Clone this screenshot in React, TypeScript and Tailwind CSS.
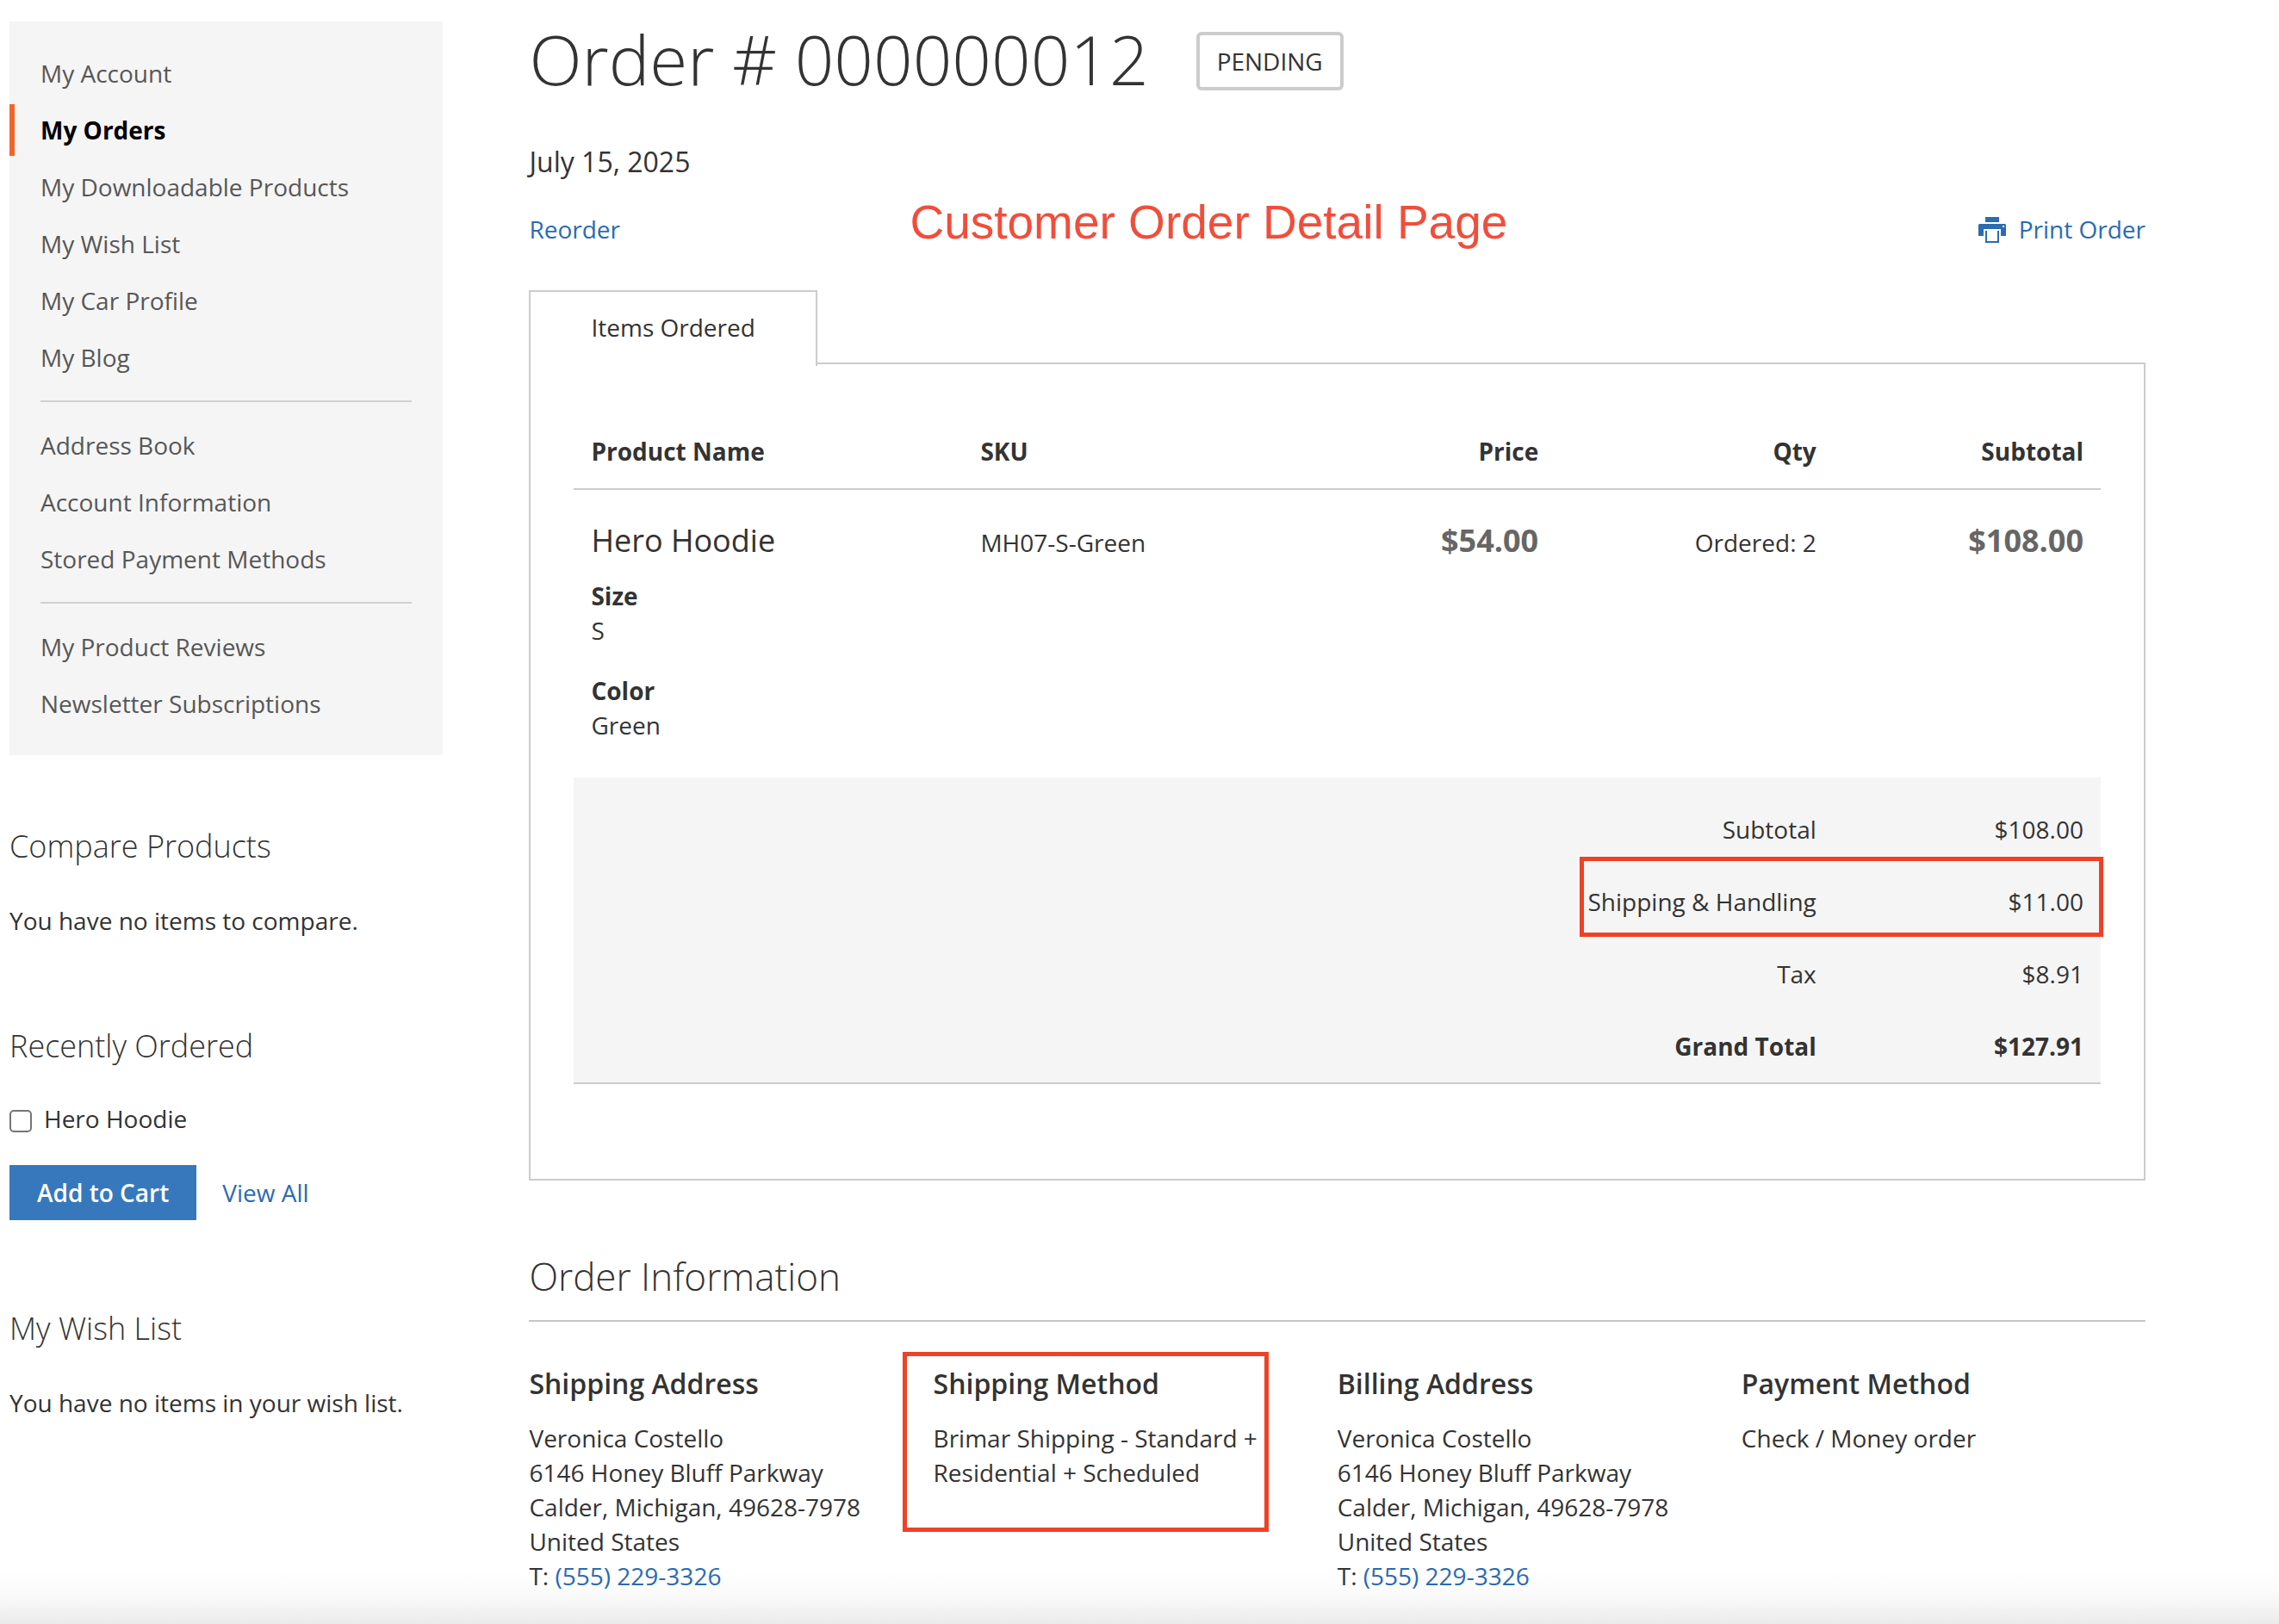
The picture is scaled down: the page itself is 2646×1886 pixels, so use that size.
import React from "react";

const navGroups = [
  ["My Account", "My Orders", "My Downloadable Products", "My Wish List", "My Car Profile", "My Blog"],
  ["Address Book", "Account Information", "Stored Payment Methods"],
  ["My Product Reviews", "Newsletter Subscriptions"],
];

const options = [
  { label: "Size", value: "S" },
  { label: "Color", value: "Green" },
];

const totals = [
  { label: "Subtotal", value: "$108.00" },
  { label: "Shipping & Handling", value: "$11.00", highlighted: true },
  { label: "Tax", value: "$8.91" },
  { label: "Grand Total", value: "$127.91", bold: true },
];

function AccountNav() {
  return (
    <nav className="mt-[25px] bg-[#f5f5f5] py-[30px]" aria-label="Account">
      {navGroups.map((group, g) => (
        <ul
          key={g}
          className={
            g > 0
              ? "relative mt-5 flex flex-col gap-1.5 pt-[22px] before:absolute before:inset-x-9 before:top-0 before:h-0.5 before:bg-[#d1d1d1]"
              : "flex flex-col gap-1.5"
          }
        >
          {group.map((item) => (
            <li key={item}>
              <a
                href="#"
                aria-current={item === "My Orders" ? "page" : undefined}
                className={
                  item === "My Orders"
                    ? "block border-l-6 border-[#f0652a] py-2.5 pl-[30px] font-bold text-black"
                    : "block border-l-6 border-transparent py-2.5 pl-[30px] text-[#575757]"
                }
              >
                {item}
              </a>
            </li>
          ))}
        </ul>
      ))}
    </nav>
  );
}

function PrinterIcon() {
  return (
    <svg width="32" height="30" viewBox="0 0 32 30" fill="currentColor" className="mt-0.5" aria-hidden="true">
      <rect x="8" y="0" width="16" height="6" />
      <path d="M1 8H31L32 9V22H26V14H6V22H0V9ZM28 10V12H30V10Z" fillRule="evenodd" />
      <path d="M8 16H10V28H22V16H24V30H8Z" />
    </svg>
  );
}

function Address() {
  return (
    <address className="not-italic">
      Veronica Costello
      <br />
      6146 Honey Bluff Parkway
      <br />
      Calder, Michigan, 49628-7978
      <br />
      United States
      <br />
      T:{" "}
      <a href="tel:5552293326" className="text-[#2a6bb2]">
        (555) 229-3326
      </a>
    </address>
  );
}

function InfoBox({ title, highlighted, children }: { title: string; highlighted?: boolean; children: React.ReactNode }) {
  return (
    <section className="relative">
      <h3 className="mb-[23px] text-[32px] leading-10 font-semibold">{title}</h3>
      <div className="pr-9">{children}</div>
      {highlighted && (
        <span className="pointer-events-none absolute -top-[17px] right-20 -left-9 h-[209px] border-5 border-[#ee4126]" />
      )}
    </section>
  );
}

export default function App() {
  return (
    <div className="relative min-h-screen bg-white pr-[155px] pb-4 pl-[11px] font-['Open_Sans','Noto_Sans',sans-serif] text-[28px] leading-10 text-[#333]">
      <div className="flex gap-[100px]">
        <aside className="w-[20.3%] shrink-0">
          <AccountNav />

          <section className="mt-[86px]">
            <h2 className="text-[36px] leading-10 font-light">Compare Products</h2>
            <p className="mt-[46px] whitespace-nowrap">You have no items to compare.</p>
          </section>

          <section className="mt-[106px]">
            <h2 className="text-[36px] leading-10 font-light">Recently Ordered</h2>
            <label className="mt-11 flex items-center gap-3.5">
              <input
                type="checkbox"
                className="mt-1.5 size-[26px] appearance-none rounded-[5px] border-2 border-[#767676] bg-white checked:bg-[#3778bd]"
              />
              Hero Hoodie
            </label>
            <div className="mt-[34px] flex items-center gap-[30px]">
              <button type="button" className="h-16 bg-[#3778bd] px-8 font-semibold whitespace-nowrap text-white">
                Add to Cart
              </button>
              <a href="#" className="whitespace-nowrap text-[#2a6bb2]">
                View All
              </a>
            </div>
          </section>

          <section className="mt-[106px]">
            <h2 className="text-[36px] leading-10 font-light">My Wish List</h2>
            <p className="mt-[46px] whitespace-nowrap">You have no items in your wish list.</p>
          </section>
        </aside>

        <main className="min-w-0 flex-1 pt-6">
          <div className="flex items-center gap-[55px]">
            <h1 className="text-[80px] leading-[88px] font-light">Order # 000000012</h1>
            <span className="mt-1.5 rounded-md border-4 border-[#ccc] px-5 py-2.5">PENDING</span>
          </div>
          <p className="mt-14 text-[32px]">July 15, 2025</p>

          <div className="relative mt-[38px] flex items-center justify-between">
            <a href="#" className="text-[#2a6bb2]">
              Reorder
            </a>
            <a href="#" className="flex items-center gap-[15px] text-[#2a6bb2]">
              <PrinterIcon />
              Print Order
            </a>
            <p className="pointer-events-none absolute -top-3 left-[442px] font-['Liberation_Sans',Arial,sans-serif] text-[55px] leading-[48px] whitespace-nowrap text-[#f04e3c]">
              Customer Order Detail Page
            </p>
          </div>

          <div className="mt-[51px]">
            <h2 className="relative z-10 -mb-1 inline-block h-[88px] border-2 border-b-0 border-[#ccc] bg-white px-[70px] pt-[21px] align-top">
              Items Ordered
            </h2>
            <div className="border-2 border-[#ccc] px-[50px] pt-[81px] pb-[110px]">
              <table className="w-full table-fixed border-collapse text-right">
                <colgroup>
                  <col className="w-[25.5%]" />
                  <col className="w-[24.8%]" />
                  <col className="w-[14%]" />
                  <col className="w-[18.2%]" />
                  <col className="w-[17.5%]" />
                </colgroup>
                <thead>
                  <tr className="border-b-2 border-[#ccc]">
                    <th className="px-5 pb-[23px] text-left font-bold">Product Name</th>
                    <th className="px-5 pb-[23px] text-left font-bold">SKU</th>
                    <th className="px-5 pb-[23px] font-bold">Price</th>
                    <th className="px-5 pb-[23px] font-bold">Qty</th>
                    <th className="px-5 pb-[23px] font-bold">Subtotal</th>
                  </tr>
                </thead>
                <tbody>
                  <tr className="align-baseline">
                    <td className="px-5 pt-[39px] pb-[41px] text-left">
                      <strong className="block text-[36px] font-normal">Hero Hoodie</strong>
                      <dl className="mt-6 flex flex-col gap-[30px]">
                        {options.map((o) => (
                          <div key={o.label}>
                            <dt className="font-bold">{o.label}</dt>
                            <dd>{o.value}</dd>
                          </div>
                        ))}
                      </dl>
                    </td>
                    <td className="px-5 text-left">MH07-S-Green</td>
                    <td className="px-5 text-[36px] font-bold text-[#666]">$54.00</td>
                    <td className="px-5">Ordered: 2</td>
                    <td className="px-5 text-[36px] font-bold text-[#666]">$108.00</td>
                  </tr>
                </tbody>
                <tfoot className="border-b-2 border-[#ccc] bg-[#f5f5f5] [&>tr:first-child>*]:pt-10">
                  {totals.map((t) => (
                    <tr key={t.label}>
                      <th
                        scope="row"
                        colSpan={4}
                        className={t.bold ? "px-5 py-[22px] font-bold" : "px-5 py-[22px] font-normal"}
                      >
                        {t.label}
                      </th>
                      <td className={t.bold ? "px-5 py-[22px] font-bold" : "relative px-5 py-[22px]"}>
                        {t.value}
                        {t.highlighted && (
                          <span className="pointer-events-none absolute -top-2.5 -right-[3px] bottom-px -left-[295px] border-5 border-[#ee4126]" />
                        )}
                      </td>
                    </tr>
                  ))}
                </tfoot>
              </table>
            </div>
          </div>

          <section className="mt-[86px]">
            <h2 className="border-b-2 border-[#c6c6c6] pb-[26px] text-[44px] leading-[50px] font-light">
              Order Information
            </h2>
            <div className="mt-[52px] grid grid-cols-4">
              <InfoBox title="Shipping Address">
                <Address />
              </InfoBox>
              <InfoBox title="Shipping Method" highlighted>
                Brimar Shipping - Standard + Residential + Scheduled
              </InfoBox>
              <InfoBox title="Billing Address">
                <Address />
              </InfoBox>
              <InfoBox title="Payment Method">Check / Money order</InfoBox>
            </div>
          </section>
        </main>
      </div>
      <div className="pointer-events-none absolute inset-x-0 bottom-0 h-16 bg-linear-to-t from-black/8 via-black/2 to-transparent" />
    </div>
  );
}
